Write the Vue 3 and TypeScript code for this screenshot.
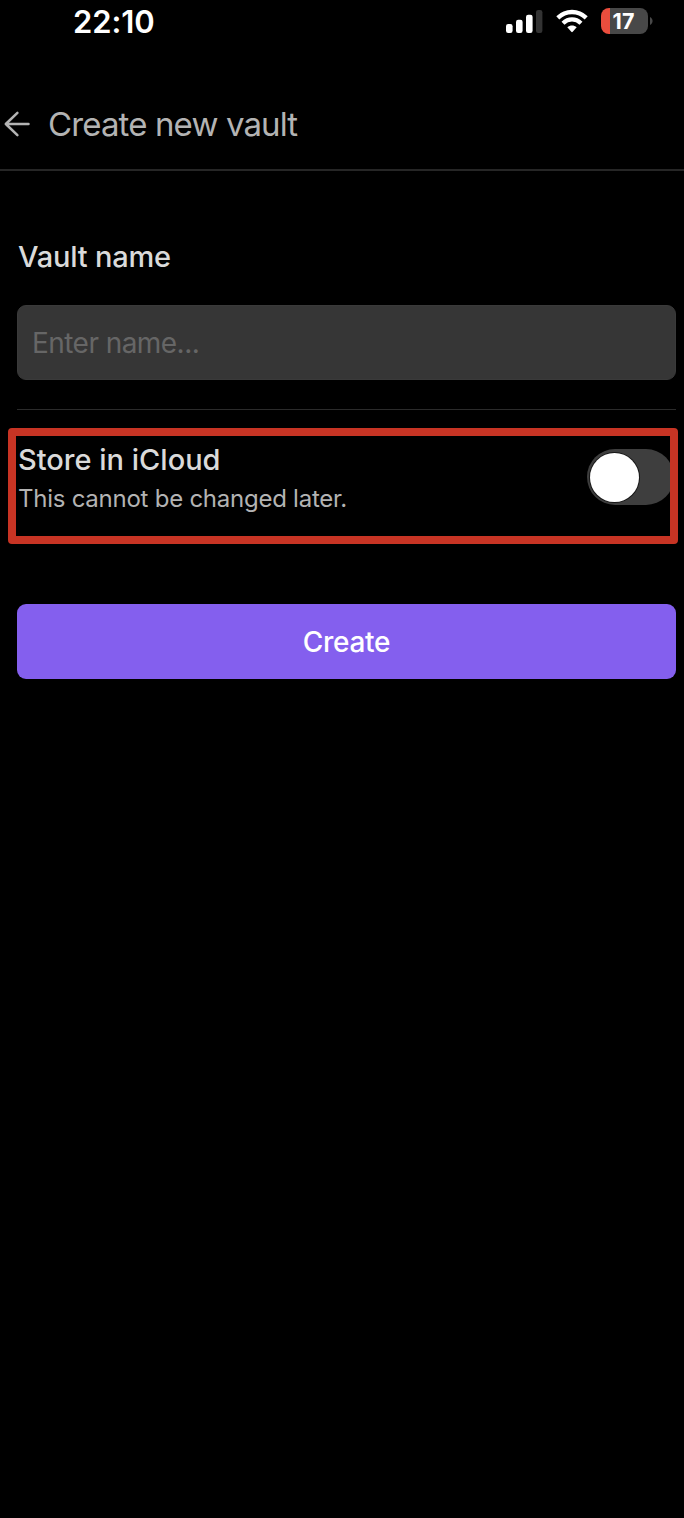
<script setup lang="ts">
import { ref } from 'vue'

const time = ref<string>('22:10')
const battery = ref<number>(17)
const vaultName = ref<string>('')
const iCloud = ref<boolean>(false)
</script>

<template>
  <main class="screen">
    <div class="status">
      <span class="time">{{ time }}</span>
      <div class="indicators">
        <svg class="signal" width="37" height="24" viewBox="0 0 37 24">
          <rect x="0" y="14" width="6.6" height="9" rx="2.2" fill="#fff" />
          <rect x="10" y="9.7" width="6.6" height="13.3" rx="2.2" fill="#fff" />
          <rect x="20" y="4.7" width="6.6" height="18.3" rx="2.2" fill="#fff" />
          <rect x="30" y="0" width="6.4" height="23" rx="2.2" fill="#333" />
        </svg>
        <svg class="wifi" width="32" height="24" viewBox="0 0 32 24">
          <g fill="none" stroke="#fff" stroke-width="4.3">
            <path d="M1.8 8.9C9.8 1 22.2 1 30.2 8.9" />
            <path d="M7 14.2C12.3 9.2 19.7 9.2 25 14.2" />
          </g>
          <path d="M11.3 18.2C14.1 15.8 17.9 15.8 20.7 18.2L16.7 22.8Q16 23.5 15.3 22.8Z" fill="#fff" />
        </svg>
        <div class="battery"><span>{{ battery }}</span></div>
        <svg class="cap" width="3" height="8" viewBox="0 0 3 8"><path d="M0 0C3.4 1.4 3.4 6.6 0 8Z" fill="#484848" /></svg>
      </div>
    </div>

    <header class="header">
      <svg width="26" height="26" viewBox="0 0 26 26" fill="none" stroke="#b3b3b3" stroke-width="2.5" stroke-linecap="round" stroke-linejoin="round">
        <path d="M13.4 1.8L1.8 13L13.4 24.2M1.8 13H24.5" />
      </svg>
      <h1>Create new vault</h1>
    </header>

    <form class="form" @submit.prevent>
      <label class="label name" for="vault">Vault name</label>
      <input id="vault" v-model="vaultName" class="field" placeholder="Enter name..." />
      <div class="option">
        <div class="copy">
          <div class="label">Store in iCloud</div>
          <div class="hint">This cannot be changed later.</div>
        </div>
        <button type="button" class="toggle" role="switch" :aria-checked="iCloud" :class="{ on: iCloud }" @click="iCloud = !iCloud">
          <span class="knob"></span>
        </button>
        <div class="highlight"></div>
      </div>
      <button type="submit" class="create"><span>Create</span></button>
    </form>
  </main>
</template>

<style>
body { background: #000; }
</style>

<style scoped>
.screen {
  box-sizing: border-box;
  width: 684px;
  height: 1518px;
  overflow: hidden;
  background: #000;
  font-family: Inter, "Liberation Sans", sans-serif;
}
.status {
  display: flex;
  justify-content: space-between;
  height: 44px;
  padding: 0 31px 0 73px;
}
.time {
  font-size: 31px;
  font-weight: 600;
  line-height: 44px;
  letter-spacing: -0.1px;
  color: #fff;
}
.indicators { display: flex; align-items: flex-start; }
.signal { margin: 10px 13px 0 0; }
.wifi { margin: 9px 13px 0 0; }
.battery {
  width: 47px;
  height: 26px;
  margin-top: 8px;
  border-radius: 8px;
  background: linear-gradient(90deg, #eb4d3d 9px, #484848 9px);
  color: #fff;
  font-size: 21.5px;
  font-weight: 700;
  line-height: 27px;
  text-align: center;
}
.battery span { margin-right: 2px; }
.cap { margin: 17px 0 0 2px; }
.header {
  box-sizing: border-box;
  display: flex;
  align-items: center;
  gap: 18px;
  height: 127px;
  padding: 36px 0 1px 4px;
  border-bottom: 2px solid #262626;
}
h1 {
  margin: 0;
  color: #b3b3b3;
  font-size: 33px;
  font-weight: 400;
  line-height: 40px;
  letter-spacing: -0.87px;
}
.form {
  display: flex;
  flex-direction: column;
  padding: 66px 8px 0 17px;
}
.label {
  padding-left: 1px;
  color: #dadada;
  font-size: 29px;
  font-weight: 500;
  line-height: 40px;
  white-space: nowrap;
}
.name { letter-spacing: -0.2px; }
.field {
  box-sizing: border-box;
  width: 100%;
  height: 75px;
  margin-top: 28px;
  padding: 0 14px;
  border: 1px solid #3a3a3a;
  border-radius: 9px;
  outline: 0;
  background: #363636;
  color: #dadada;
  font-family: inherit;
  font-size: 28px;
  letter-spacing: -0.55px;
}
.field::placeholder { color: #666; opacity: 1; }
.option {
  position: relative;
  box-sizing: border-box;
  display: flex;
  justify-content: space-between;
  height: 136px;
  margin-top: 29px;
  border-top: 1px solid #2b2b2b;
}
.copy { padding-top: 30px; }
.hint {
  padding-left: 1px;
  color: #b3b3b3;
  font-size: 24px;
  line-height: 38px;
  letter-spacing: -0.25px;
  white-space: nowrap;
}
.toggle {
  flex: none;
  display: flex;
  align-items: center;
  width: 87px;
  height: 56px;
  margin: 39px 2px 0 0;
  padding: 0 3px;
  border: 0;
  border-radius: 28px;
  background: #3e3e3e;
}
.toggle.on { justify-content: flex-end; }
.knob {
  width: 49px;
  height: 49px;
  border-radius: 50%;
  background: #fff;
  box-shadow: 0 0 0 1px #161616;
}
.highlight {
  position: absolute;
  top: 18px;
  left: -9px;
  box-sizing: border-box;
  width: 670px;
  height: 116px;
  border: 8px solid #c73424;
  border-radius: 4px;
  pointer-events: none;
}
.create {
  width: 100%;
  height: 75px;
  margin-top: 59px;
  border: 0;
  border-radius: 9px;
  background: #845fee;
  color: #fff;
  font-family: inherit;
  font-size: 28px;
  font-weight: 500;
  letter-spacing: -0.3px;
}
</style>
